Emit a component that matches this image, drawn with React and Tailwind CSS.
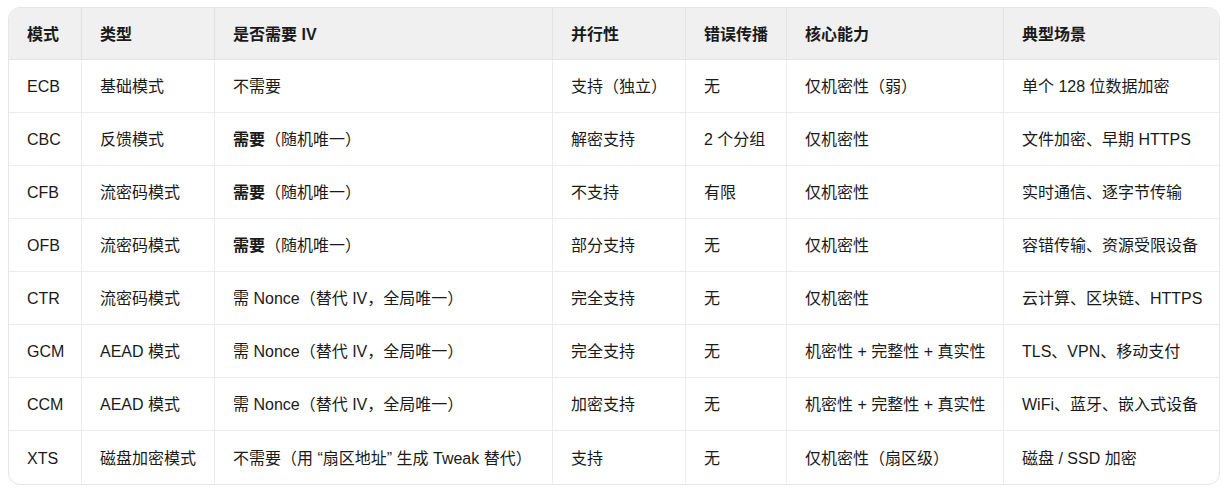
const headers = ["模式", "类型", "是否需要 IV", "并行性", "错误传播", "核心能力", "典型场景"];

const widths = ["w-[73px]", "w-[133px]", "w-[338px]", "w-[133px]", "w-[101px]", "w-[217px]", "w-[215px]"];

const rows = [
  ["ECB", "基础模式", <>不需要</>, "支持（独立）", "无", "仅机密性（弱）", "单个 128 位数据加密"],
  ["CBC", "反馈模式", <><b className="font-bold">需要</b>（随机唯一）</>, "解密支持", "2 个分组", "仅机密性", "文件加密、早期 HTTPS"],
  ["CFB", "流密码模式", <><b className="font-bold">需要</b>（随机唯一）</>, "不支持", "有限", "仅机密性", "实时通信、逐字节传输"],
  ["OFB", "流密码模式", <><b className="font-bold">需要</b>（随机唯一）</>, "部分支持", "无", "仅机密性", "容错传输、资源受限设备"],
  ["CTR", "流密码模式", <>需 Nonce（替代 IV，全局唯一）</>, "完全支持", "无", "仅机密性", "云计算、区块链、HTTPS"],
  ["GCM", "AEAD 模式", <>需 Nonce（替代 IV，全局唯一）</>, "完全支持", "无", "机密性 + 完整性 + 真实性", "TLS、VPN、移动支付"],
  ["CCM", "AEAD 模式", <>需 Nonce（替代 IV，全局唯一）</>, "加密支持", "无", "机密性 + 完整性 + 真实性", "WiFi、蓝牙、嵌入式设备"],
  ["XTS", "磁盘加密模式", <>不需要（用 “扇区地址” 生成 Tweak 替代）</>, "支持", "无", "仅机密性（扇区级）", "磁盘 / SSD 加密"],
];

export default function App() {
  return (
    <div
      className="bg-white w-[1231px] h-[489px] pt-[7px] pl-[8px]"
      style={{ fontFamily: '"Liberation Sans", "Noto Sans CJK SC", sans-serif' }}
    >
      <div className="w-[1212px] rounded-xl border border-[#e6e6e6] overflow-hidden">
        <table className="table-fixed border-separate border-spacing-0 w-full text-[16px] text-[#1a1a1a]">
          <colgroup>
            {widths.map((w, i) => (
              <col key={i} className={w} />
            ))}
          </colgroup>
          <thead>
            <tr className="bg-[#f0f0f0]">
              {headers.map((h, i) => (
                <th
                  key={h}
                  className={`h-[52px] pt-[2px] text-left font-bold px-[18px] border-b border-[#e3e3e3] ${
                    i < headers.length - 1 ? "border-r" : ""
                  }`}
                >
                  {h}
                </th>
              ))}
            </tr>
          </thead>
          <tbody>
            {rows.map((r, ri) => (
              <tr key={ri}>
                {r.map((c, ci) => (
                  <td
                    key={ci}
                    className={`h-[53px] pt-[2px] px-[18px] whitespace-nowrap border-[#ececec] ${
                      ci < r.length - 1 ? "border-r" : ""
                    } ${ri < rows.length - 1 ? "border-b" : ""}`}
                  >
                    {c}
                  </td>
                ))}
              </tr>
            ))}
          </tbody>
        </table>
      </div>
    </div>
  );
}
